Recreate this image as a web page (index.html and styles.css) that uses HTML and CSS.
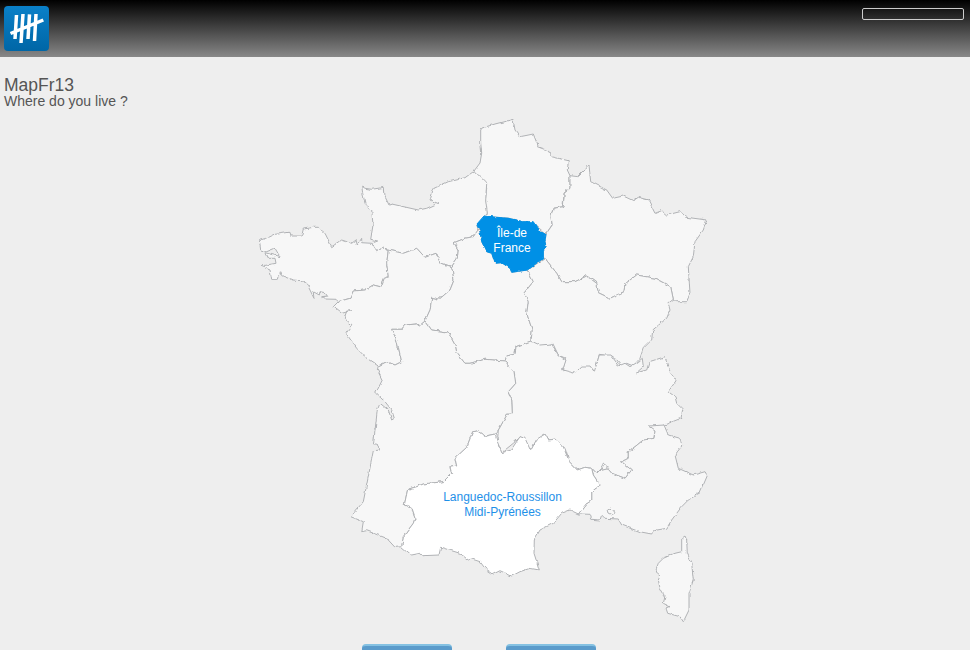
FILE: index.html
```html
<!DOCTYPE html>
<html lang="en">
<head>
<meta charset="utf-8">
<title>MapFr13</title>
<link rel="stylesheet" href="styles.css">
</head>
<body>
<header class="topbar">
  <div class="logo">
    <svg class="logo-mark" viewBox="0 0 45 45" width="45" height="45">
      <path d="M12.500 9L11 33M19 8L17 37M25.500 8.300L24 33M32 8L30.500 35M6.500 27.500L39.300 14"/>
    </svg>
  </div>
  <input class="search" type="text" aria-label="Search">
</header>
<section class="intro">
  <h1 class="intro-title">MapFr13</h1>
  <p class="intro-question">Where do you live ?</p>
</section>
<svg class="map" viewBox="250 110 470 520" width="470" height="520">
  <defs>
    <filter id="rough" x="0" y="0" width="100%" height="100%" filterUnits="objectBoundingBox">
      <feTurbulence type="fractalNoise" baseFrequency="0.17" numOctaves="2" seed="4" result="noise"/>
      <feDisplacementMap in="SourceGraphic" in2="noise" scale="3.5" xChannelSelector="R" yChannelSelector="G"/>
      <feGaussianBlur stdDeviation="0.3"/>
    </filter>
  </defs>
  <g class="regions">
  <path class="region" d="M480.700 143L480.700 130L482 128L495 124L513 119.300L515 130L520 136.700L526 135.500L533.300 134L538.300 146.700L549 150.700L551.700 156.700L568.300 160.700L567.300 170L570 175.700L570 188L564 193L563 206.700L553 208L551 216.700L552 225L546 234L533 223L523 221.700L508 218L497 217.300L484 216L487 213L485 203L486.700 188L483 180.700L474 171L480 163L481.700 153Z"/>
  <path class="region" d="M361.700 186L365 188.300L371.700 189.300L384.300 187.300L385 196.700L389 205L391.700 204L418.300 210L426.700 208.300L437.700 203.300L430 200L434 188.300L448.300 181.700L465 177.700L474.300 171L486.700 183.300L485.700 200L487.300 213.300L484.300 217.300L476.700 225L478.300 230L473.300 236.700L465 238.300L454 242.700L458.300 250L457.300 258.300L451.700 266.700L440 262.700L436 253.300L425 257.300L416.700 248.300L403.300 253.300L388.300 250L383.300 247.300L376.700 251.700L371.700 243.300L377.700 241L370.700 239.300L373 225L371.700 210L365 203.300L362.700 193.300Z"/>
  <path class="region" d="M259.300 240.700L266.700 238.300L275 234.300L289 232.300L290 236L301.700 236L303.300 229L313.300 227.300L318.300 227.300L325 233.300L331.700 246.700L341.700 240L351.700 243.300L356 240L357.300 245L361.700 238.300L361.700 242.700L371.700 243.300L376.700 251.700L383.300 247.300L388.300 250L386.700 263.300L388.300 276.700L383.300 278.300L380 286.700L373.300 285L365 290L353.300 291L350 298.300L338.300 301.700L336 299.300L325 299L321.700 296.700L327.300 296L325 292.700L320 291.700L319.300 295L313.300 291.700L314 298.300L306.700 283.300L301.700 280.700L292.700 280L281.700 275.700L280.700 271.700L278.300 279.300L271.700 279.300L270 270L260.700 266L276 263.300L275 258.300L266.700 258.300L265 252.700L280 256.700L275 248.300L266.700 251.700L260.700 250Z"/>
  <path class="region" d="M388.300 250L403.300 253.300L416.700 248.300L425 257.300L436 253.300L440 262.700L451.700 266.700L454 280L450 290L438.300 300L431.700 298.300L430 310L425 321L419.300 326L416.700 324L405 325L401.700 329.300L391.700 329.300L396.700 340L401.700 361.700L395 365L386.700 361.700L378.300 366L366.700 358.300L356.700 348.300L346 333.300L352.300 325L344.300 318.300L346.700 311L351.700 310.700L341.700 313.300L333.300 306.700L338.300 301.700L350 298.300L353.300 291L365 290L373.300 285L380 286.700L383.300 278.300L388.300 276.700L386.700 263.300Z"/>
  <path class="region" d="M478 230L473.300 236.700L465 238.300L454 242.700L458.300 250L457.300 258.300L451.700 266.700L454 280L450 290L438.300 300L431.700 298.300L430 310L425 321L431.700 330L444.300 331.700L447.700 331.700L455 345L456.700 353.300L465 363.300L470 363.300L485 359.300L505 361L506.700 356L515 354L516 346.700L531 341L532.300 330L526.700 313.300L528.300 301.700L524.300 292.700L533.300 281.700L527.300 270L511.700 272.300L510 268.300L501.700 262.700L495 263.300L491.700 253.300L486.700 251.700L481.700 241.700L480 231.700Z"/>
  <path class="region" d="M570 175.700L578.300 176.700L585 170L589 165L590.700 181.700L606.700 190L612.700 198.300L623.300 196L633.300 200.700L638.300 197.300L648.300 200L655 213.300L661.700 210.700L666.700 215L680 211.700L686.700 217.300L706.700 220L703.300 230L695 241.700L693.300 256.700L688.300 266.700L690 293.300L686.700 301.700L676.700 301.700L673.300 299.300L670.700 286.700L655 278.300L636.700 275L630 280L625 284L624 291.700L610 298.300L598.300 292.700L596.700 283.300L586.700 276L575 281.700L561.700 281.700L556.700 273.300L545 258.300L543.300 258.300L543.300 250L546 246.700L545 241.700L546 234L552.300 225L551 216.700L553.300 208.300L563.300 206.700L564.300 193.300L570 188.300Z"/>
  <path class="region" d="M527.300 270L545 258.300L556.700 273.300L561.700 281.700L575 281.700L586.700 276L596.700 283.300L598.300 292.700L610 298.300L624 291.700L625 284L630 280L636.700 275L655 278.300L670.700 286.700L673.300 299.300L668.300 303.300L670 310L666.700 318.300L652.700 330L651.700 340L643.300 348.300L640 358.300L633.300 366L626.700 363.300L621.700 366.700L613.300 356.700L599.300 354.300L595 371.700L590 366.700L581.700 366.700L575 373.300L565 372.700L563.300 368.300L565.700 358.300L558.300 355L552.700 343.300L546.700 347.300L538.300 346.700L531 341L532.300 330L526.700 313.300L528.300 301.700L524.300 292.700L533.300 281.700Z"/>
  <path class="region" d="M531 341L540 345L551.700 344L558.300 355L566 360L562.700 370L575 373.300L581.700 366L590 366L594.300 371.700L599.300 355L610 355L618.300 366L625 363.300L630 366.700L638.300 361.700L642.300 358.300L643.300 366.700L636.700 372.700L646.700 370L649.300 361.700L665 356.700L668.300 368.300L676 380.700L668.300 391.700L675 396.700L676.700 403.300L682.700 409.300L681 418.300L664 425L655 430L654 438.300L643.300 440L635 446.700L628.300 451.700L628.300 458.300L621.700 461.700L631.700 470L625 478.300L611.700 473.300L608.300 469.300L601.700 468.300L596.700 473.300L591.700 468.300L585 467.300L577.300 470L569.300 461.700L565 448.300L555 439L548.300 440L545 434.300L536.700 440L530.700 450.700L520.700 436.700L513.300 443.300L501.700 452.700L497.300 443.300L498.300 430L507.300 414L512.300 414L511.700 400L508.300 391.700L515.700 383.300L514 371.700L505 361L506.700 356L515 354L516 346.700Z"/>
  <path class="region" d="M664 425L668.300 435L680 438.300L681.700 446L675 455L678.300 468.300L693.300 475L705 471.700L707.300 475.700L700 492.700L688.300 500L681.700 506.700L671.700 520L666.700 528.300L653.300 530.700L651.700 534L639.300 531.700L621.700 525L618.300 519L605 518.300L601.700 515L600 520L591.700 519.300L590 514.300L578.300 514L586.700 503.300L591.700 500L591.700 491.700L600 485L593.300 475L591.700 468.300L596.700 473.300L601.700 468.300L608.300 469.300L611.700 473.300L625 478.300L631.700 470L621.700 461.700L628.300 458.300L628.300 451.700L635 446.700L643.300 440L654 438.300L655 430L649.300 426Z"/>
  <path class="region" d="M681.700 538.300L685 536L686.700 540L687.300 553.300L691.700 563.300L693.300 580L689 593.300L689 610L683.300 621.700L680 616.700L667.700 613.300L666 608.300L670 606.700L663.300 603.300L665 596.700L660 588.300L658.300 580L660 576L655 571.700L658.300 563.300L663.300 558.300L675 553.300L681.700 551.700Z"/>
  <path class="region" d="M378.300 366L377.300 370L382.300 380L375.700 393.300L385 401.700L391.700 410L394.300 418.300L391.700 420L388.300 410L380 403.300L377.300 410L373.500 444L376.700 444L380.700 450L373.300 450.700L368.300 476.700L363.300 501.700L350.700 516.700L363.300 521.700L361.700 531.700L366.700 530.700L386.700 538.300L395 547.300L401.700 546.700L403.300 536.700L413.300 523.300L415 518.300L411.700 508.300L404.300 505L407.700 489.300L416.700 486.700L423.300 484L443.300 481.700L451.700 473.300L450 467.300L456.700 466L455 458.300L466.700 447.300L472.700 431.700L478.300 431L485.700 436L495 434L498.300 430L507.300 414L512.300 414L511.700 400L508.300 391.700L515.700 383.300L514 371.700L505 361L485 359.300L470 363.300L465 363.300L456.700 353.300L455 345L447.700 331.700L444.300 331.700L431.700 330L425 321L419.300 326L416.700 324L405 325L401.700 329.300L391.700 329.300L396.700 340L401.700 361.700L395 365L386.700 361.700Z"/>
  <path class="region region-hover" d="M472.700 431.700L478.300 431L485.700 436L495 434L496.700 440L501.700 452.700L511 450L520 436.700L525 438.300L530.700 450.700L536.700 439.300L545 434L548.300 440L555 439.300L563.300 446.700L569.300 461.700L577.300 470L585 467.300L591.700 468.300L593.300 475L600 485L591.700 491.700L591.700 500L586.700 503.300L578.300 514L570 510L561.700 513.300L553.300 523.300L540 530L534.300 540L534 553.300L539.300 570L530 568.300L520 571.700L511.700 576L500 570.700L493.300 574L485 568.300L480 561.700L471.700 559L468.300 560L460 553.300L440.700 547.300L439 555L423.300 555.700L420 553.300L411.700 555L401.700 546.700L403.300 536.700L413.300 523.300L415 518.300L411.700 508.300L404.300 505L407.700 489.300L416.700 486.700L423.300 484L443.300 481.700L451.700 473.300L450 467.300L456.700 466L455 458.300L466.700 447.300Z"/>
  <path class="region region-active" d="M484 216L496.700 217.300L508.300 218.300L523.300 221.700L533.300 221.700L538.300 230L546 234L545 241.700L546 246.700L543.300 250L543.300 258.300L527.300 270L511.700 272.300L510 268.300L501.700 262.700L495 263.300L491.700 253.300L486.700 251.700L481.700 241.700L480 231.700L476.700 224.300Z"/>
  <path class="region" d="M601.500 466L604 464L607 466L606.500 469L603 470Z"/>
  <path class="region" d="M607 509.500L611 508L615 512.500L612 515L608 513Z"/>
  </g>
  <text class="label label-active" x="512" y="237">Île-de</text>
  <text class="label label-active" x="512" y="252">France</text>
  <text class="label label-hover" x="502.500" y="501">Languedoc-Roussillon</text>
  <text class="label label-hover" x="502.500" y="516">Midi-Pyrénées</text>
</svg>
<div class="actions">
  <button class="action" type="button"></button>
  <button class="action" type="button"></button>
</div>
</body>
</html>
```
FILE: styles.css
```css
html, body {
  margin: 0;
  padding: 0;
}
body {
  height: 650px;
  overflow: hidden;
  background: #eeeeee;
  color: #555555;
  font-family: "Liberation Sans", Arial, sans-serif;
}
.topbar {
  height: 57px;
  box-sizing: border-box;
  padding: 6px 6px 0 4px;
  display: flex;
  justify-content: space-between;
  align-items: flex-start;
  background: linear-gradient(#000000, #888888);
}
.logo {
  width: 45px;
  height: 45px;
  border-radius: 4px;
  background: linear-gradient(#0a80c8, #0066a6);
}
.logo-mark {
  display: block;
}
.logo-mark path {
  fill: none;
  stroke: #ffffff;
  stroke-width: 3.5;
}
.search {
  width: 102px;
  height: 12px;
  box-sizing: border-box;
  margin: 2px 0 0;
  padding: 0;
  border: 1px solid #cccccc;
  border-radius: 2px;
  background: transparent;
}
.intro {
  height: 53px;
  box-sizing: border-box;
  padding: 20px 0 0 4px;
}
.intro-title {
  margin: 0;
  font-size: 17.5px;
  line-height: 17px;
  font-weight: normal;
}
.intro-question {
  margin: 0;
  font-size: 14px;
  line-height: 14px;
}
.map {
  display: block;
  margin: 0 auto;
}
.regions {
  filter: url(#rough);
}
.region {
  fill: #f7f7f7;
  stroke: #b0b2b5;
  stroke-width: 1;
  stroke-linejoin: round;
}
.region-hover {
  fill: #ffffff;
}
.region-active {
  fill: #0090e6;
  stroke: #0090e6;
}
.label {
  font-family: "Liberation Sans", Arial, sans-serif;
  font-size: 12px;
  text-anchor: middle;
}
.label-active {
  fill: #ffffff;
}
.label-hover {
  fill: #1e90e8;
}
.actions {
  display: flex;
  justify-content: center;
  gap: 54px;
  padding: 14px 12px 0 0;
}
.action {
  width: 90px;
  height: 30px;
  padding: 0;
  border: 0;
  border-top: 2px solid #84c1e2;
  border-radius: 4px 4px 0 0;
  background: #5a9bcb;
}
```
